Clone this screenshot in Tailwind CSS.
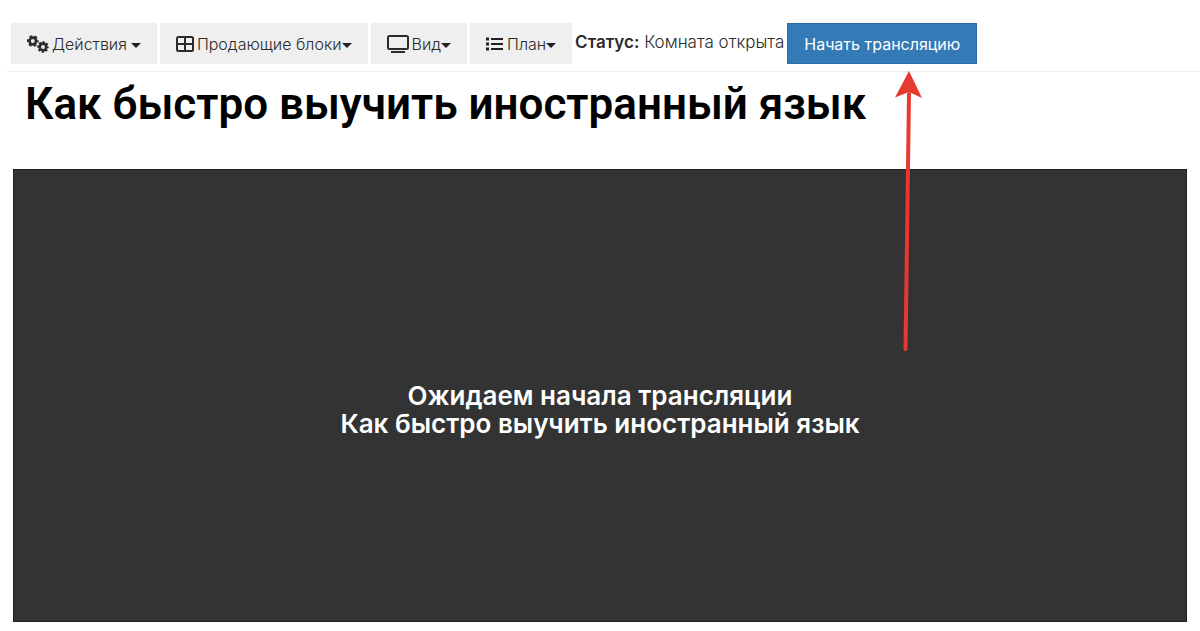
<!DOCTYPE html>
<html lang="ru">
<head>
    <meta charset="UTF-8">
    <meta name="viewport" content="width=device-width, initial-scale=1.0">
    <title>Как быстро выучить иностранный язык</title>
    <script src="https://cdn.jsdelivr.net/npm/@tailwindcss/browser@4"></script>
</head>
<body class="min-h-screen flex flex-col bg-white font-['Inter','Liberation_Sans',sans-serif] text-base text-[#2b2b2b]">

    <!-- Панель управления -->
    <header class="relative ml-[7px] pl-1 pt-[23px] pb-[7px] flex items-center gap-[3px] border-b border-[#eeeeee] whitespace-nowrap">
        <button type="button" class="h-[41px] px-4 flex items-center bg-[#efefef] font-light">
            <svg class="w-[22px] h-[18px] mr-[3px]" viewBox="0 0 22 18" fill="none" stroke="#2b2b2b" aria-hidden="true">
                <circle cx="5.8" cy="6" r="3.3" stroke-width="2.7"/>
                <circle cx="5.8" cy="6" r="4.9" stroke-width="2" stroke-dasharray="2.8 2.331" stroke-dashoffset="1.4"/>
                <circle cx="16" cy="12" r="3.3" stroke-width="2.7"/>
                <circle cx="16" cy="12" r="4.8" stroke-width="2" stroke-dasharray="2.2 1.57" stroke-dashoffset="1.1"/>
            </svg>
            <span>Действия</span>
            <span class="ml-1 mt-1 border-x-[5px] border-t-[5px] border-x-transparent border-t-[#222222]"></span>
        </button>
        <button type="button" class="h-[41px] px-4 flex items-center bg-[#efefef] font-light">
            <svg class="w-[18px] h-4 mr-[3px]" viewBox="0 0 18 16" fill="none" stroke="#2b2b2b" stroke-width="2" aria-hidden="true">
                <rect x="1" y="1" width="16" height="14" rx="1.5"/>
                <path d="M9 1v14M1 8h16"/>
            </svg>
            <span>Продающие блоки</span>
            <span class="mt-1 border-x-[5px] border-t-[5px] border-x-transparent border-t-[#222222]"></span>
        </button>
        <button type="button" class="h-[41px] px-4 flex items-center bg-[#efefef] font-light">
            <svg class="w-[22px] h-[18px] mr-[3px]" viewBox="0 0 22 18" fill="none" stroke="#2b2b2b" stroke-width="2" aria-hidden="true">
                <rect x="1" y="1" width="20" height="13" rx="1.5"/>
                <path d="M4 17h14"/>
            </svg>
            <span>Вид</span>
            <span class="mt-1 border-x-[5px] border-t-[5px] border-x-transparent border-t-[#222222]"></span>
        </button>
        <button type="button" class="h-[41px] px-4 flex items-center bg-[#efefef] font-light">
            <svg class="w-[18px] h-[14px] mr-[3px]" viewBox="0 0 18 14" fill="none" stroke="#222222" aria-hidden="true">
                <path d="M5 2h12M5 7h12M5 12h12" stroke-width="1.8"/>
                <path d="M0 2h3M0 7h3M0 12h3" stroke-width="3"/>
            </svg>
            <span>План</span>
            <span class="mt-1 border-x-[5px] border-t-[5px] border-x-transparent border-t-[#222222]"></span>
        </button>
        <p class="pb-[3px] text-[17px] leading-6 font-light"><b class="font-semibold">Статус:</b> Комната открыта</p>
        <button type="button" class="h-[41px] px-4 bg-[#337ab7] border border-[#2e6da4] text-white">Начать трансляцию</button>

        <!-- Стрелка-подсказка к кнопке запуска -->
        <svg class="absolute left-[888px] top-[70px] z-10 w-[28px] h-[282px]" viewBox="0 0 28 282" aria-hidden="true">
            <path d="M14 24L10.500 279" stroke="#e53a30" stroke-width="4" stroke-linecap="round"/>
            <path d="M14 1L27 28L14 22L0 27.500Z" fill="#e53a30"/>
        </svg>
    </header>

    <h1 class="pl-[25px] pt-1 pb-[37px] font-[Roboto,sans-serif] text-[44px] leading-[56px] font-semibold text-black">Как быстро выучить иностранный язык</h1>

    <!-- Экран ожидания -->
    <main class="grow mx-[13px] mb-[9px] flex items-center justify-center bg-[#333333] border border-[#222222] text-white text-center">
        <p class="pt-7 text-[26px] leading-[28px] font-semibold">Ожидаем начала трансляции<br>Как быстро выучить иностранный язык</p>
    </main>

</body>
</html>
